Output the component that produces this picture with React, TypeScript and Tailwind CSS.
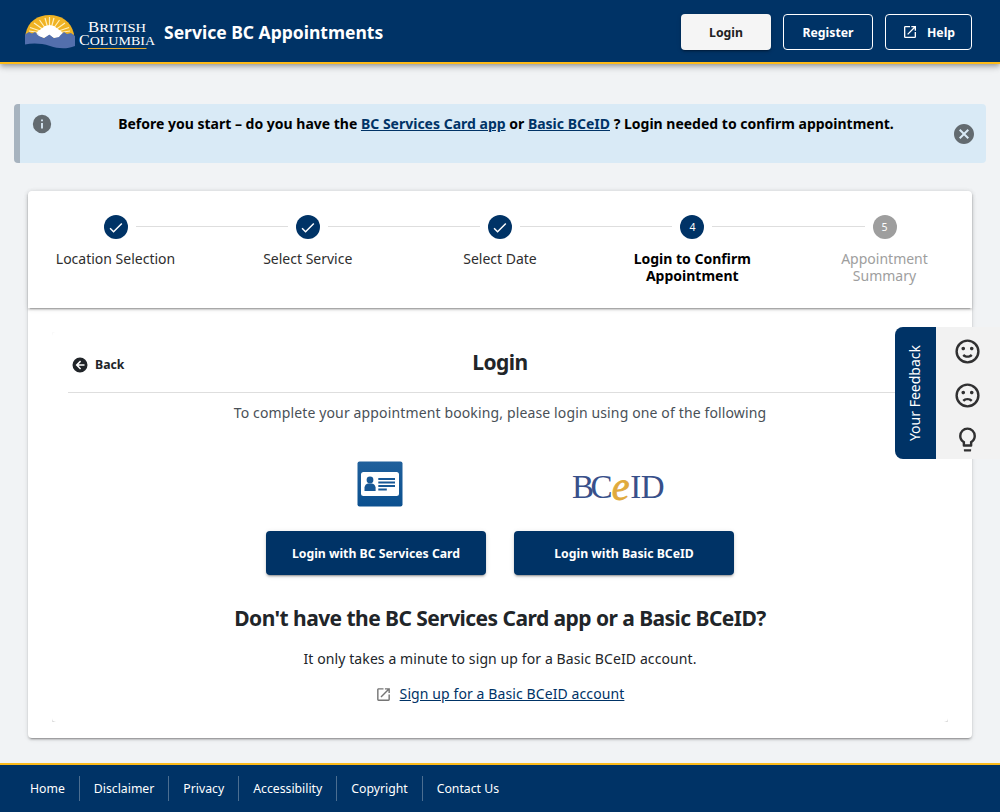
import React from "react";

const icons = {
  openInNew:
    "M14,3V5H17.59L7.76,14.83L9.17,16.24L19,6.41V10H21V3M19,19H5V5H12V3H5C3.89,3 3,3.9 3,5V19A2,2 0 0,0 5,21H19A2,2 0 0,0 21,19V12H19V19Z",
  check: "M21,7L9,19L3.5,13.5L4.91,12.09L9,16.17L19.59,5.59L21,7Z",
  information:
    "M13,9H11V7H13M13,17H11V11H13M12,2A10,10 0 0,0 2,12A10,10 0 0,0 12,22A10,10 0 0,0 22,12A10,10 0 0,0 12,2Z",
  closeCircle:
    "M12,2C17.53,2 22,6.47 22,12C22,17.53 17.53,22 12,22C6.47,22 2,17.53 2,12C2,6.47 6.47,2 12,2M15.59,7L12,10.59L8.41,7L7,8.41L10.59,12L7,15.59L8.41,17L12,13.41L15.59,17L17,15.59L13.41,12L17,8.41L15.59,7Z",
  arrowLeftCircle:
    "M2,12A10,10 0 0,1 12,2A10,10 0 0,1 22,12A10,10 0 0,1 12,22A10,10 0 0,1 2,12M18,11H10L13.5,7.5L12.08,6.08L6.16,12L12.08,17.92L13.5,16.5L10,13H18V11Z",
  happy:
    "M20,12A8,8 0 0,0 12,4A8,8 0 0,0 4,12A8,8 0 0,0 12,20A8,8 0 0,0 20,12M22,12A10,10 0 0,1 12,22A10,10 0 0,1 2,12A10,10 0 0,1 12,2A10,10 0 0,1 22,12M10,9.5C10,10.3 9.3,11 8.5,11C7.7,11 7,10.3 7,9.5C7,8.7 7.7,8 8.5,8C9.3,8 10,8.7 10,9.5M17,9.5C17,10.3 16.3,11 15.5,11C14.7,11 14,10.3 14,9.5C14,8.7 14.7,8 15.5,8C16.3,8 17,8.7 17,9.5M12,17.23C10.25,17.23 8.71,16.5 7.81,15.42L9.23,14C9.68,14.72 10.75,15.23 12,15.23C13.25,15.23 14.32,14.72 14.77,14L16.19,15.42C15.29,16.5 13.75,17.23 12,17.23Z",
  sad: "M20,12A8,8 0 0,0 12,4A8,8 0 0,0 4,12A8,8 0 0,0 12,20A8,8 0 0,0 20,12M22,12A10,10 0 0,1 12,22A10,10 0 0,1 2,12A10,10 0 0,1 12,2A10,10 0 0,1 22,12M15.5,8C16.3,8 17,8.7 17,9.5C17,10.3 16.3,11 15.5,11C14.7,11 14,10.3 14,9.5C14,8.7 14.7,8 15.5,8M10,9.5C10,10.3 9.3,11 8.5,11C7.7,11 7,10.3 7,9.5C7,8.7 7.7,8 8.5,8C9.3,8 10,8.7 10,9.5M12,14C13.75,14 15.29,14.72 16.19,15.81L14.77,17.23C14.32,16.5 13.25,16 12,16C10.75,16 9.68,16.5 9.23,17.23L7.81,15.81C8.71,14.72 10.25,14 12,14Z",
  lightbulb:
    "M12,2A7,7 0 0,1 19,9C19,11.38 17.81,13.47 16,14.74V17A1,1 0 0,1 15,18H9A1,1 0 0,1 8,17V14.74C6.19,13.47 5,11.38 5,9A7,7 0 0,1 12,2M9,21V20H15V21A1,1 0 0,1 14,22H10A1,1 0 0,1 9,21M12,4A5,5 0 0,0 7,9C7,11.05 8.23,12.81 10,13.58V16H14V13.58C15.77,12.81 17,11.05 17,9A5,5 0 0,0 12,4Z",
};

function Icon({ name, className }: { name: keyof typeof icons; className: string }) {
  return (
    <svg viewBox="0 0 24 24" fill="currentColor" className={"shrink-0 " + className}>
      <path d={icons[name]} />
    </svg>
  );
}

function BrandLogo() {
  return (
    <svg viewBox="0 0 132 36" className="mt-0.5 h-9 w-[132px] shrink-0">
      <path d="M1.500 20C4 7 14 1 25.500 1S47 7 50 20L48 26H3Z" fill="#f0b323" />
      <g stroke="#fff0bd" strokeWidth="1.200">
        <path d="M25.500 20V3M25.500 20L21 4M25.500 20L30 4M25.500 20L15.500 6M25.500 20L35.500 6M25.500 20L10 9M25.500 20L41 9M25.500 20L6 13.500M25.500 20L45 13.500M25.500 20L5 17M25.500 20L46 17" />
      </g>
      <path d="M11 23L13 18L17 15L21 12L25.500 11L30 12L34 15L38 18L40 23Z" fill="#fff" />
      <path d="M1 20.500L5 18L8 19.500L11 18L16 22L20 24L25 20L30 24L36 21.500L40 18L43 20L47 19L51 22V32C42 35.500 34 34.500 26 32C17 29 8 29 1 30.500Z" fill="#536fad" />
      <path d="M12 19.500L18 22L23 20L26 18.500L29 21L34 20L38 18.500L35 23L30 24L25.500 20.500L20 24L15 22Z" fill="#fff" />
      <g fill="#fff" fontFamily="'Liberation Serif', serif">
        <text x="64" y="18.300" fontSize="15.500" textLength="58" lengthAdjust="spacingAndGlyphs">
          B<tspan fontSize="13.500">RITISH</tspan>
        </text>
        <text x="55" y="31.200" fontSize="15.500" textLength="76" lengthAdjust="spacingAndGlyphs">
          C<tspan fontSize="13.500">OLUMBIA</tspan>
        </text>
      </g>
      <path d="M64 34.500H122.500" stroke="#e3a82b" strokeWidth="1" />
    </svg>
  );
}

function ServicesCardLogo() {
  return (
    <svg viewBox="0 0 46 46" className="h-[46px] w-[46px]">
      <defs>
        <linearGradient id="cardFill" x1="0" y1="0" x2="0" y2="1">
          <stop offset="0" stopColor="#20609c" />
          <stop offset="1" stopColor="#0b508f" />
        </linearGradient>
      </defs>
      <rect x="0.500" y="0.500" width="45" height="45" rx="2" fill="url(#cardFill)" />
      <rect x="4" y="11" width="38" height="24" rx="2.500" fill="#fff" />
      <g fill="#165795">
        <circle cx="13" cy="19" r="3.400" />
        <path d="M7.500 30V26.500Q8 23 11 22.500H15Q18 23 18.600 26.500V30Z" />
        <path d="M21.300 17H38V19H21.300ZM21.300 20.600H38V22.500H21.300ZM21.300 24H38V26H21.300ZM21.300 27.500H29.800V29.500H21.300Z" />
      </g>
    </svg>
  );
}

function BceidLogo() {
  return (
    <div
      className="flex h-[46px] w-[92px] items-center justify-between pt-1.5 font-['Liberation_Serif',serif] text-[33px] leading-10 text-[#38508a]"
    >
      <span className="flex w-[39px]">
        <span className="tracking-[-3.5px]">BC</span>
      </span>
      <span className="flex w-4 justify-center text-[40px] text-[#e0aa3c] italic [-webkit-text-stroke:0.8px_#e0aa3c]">e</span>
      <span className="flex w-[34px] justify-end tracking-[-0.5px]">ID</span>
    </div>
  );
}

const steps = ["Location Selection", "Select Service", "Select Date", "Login to Confirm Appointment", "Appointment Summary"];
const stepStyle = (i: number) =>
  i < 3 ? "text-[#2e2e2e]" : i === 3 ? "font-bold text-black" : "text-[#9e9e9e]";

const raised =
  "shadow-[0_3px_1px_-2px_rgba(0,0,0,0.2),0_2px_2px_0_rgba(0,0,0,0.14),0_1px_5px_0_rgba(0,0,0,0.12)]";

function Stepper() {
  return (
    <div className={"h-[117px] rounded-t pt-6 " + raised}>
      <div className="flex items-center pr-[75.4px] pl-[75.8px]">
        {steps.map((label, i) => (
          <React.Fragment key={label}>
            {i > 0 && <div className="mx-2 mb-px h-px flex-1 bg-[#dedede]" />}
            <div
              className={
                "flex h-6 w-6 items-center justify-center rounded-full text-[10.5px] text-white " +
                (i < 4 ? "bg-[#003366]" : "bg-[#9e9e9e]")
              }
            >
              {i < 3 ? <Icon name="check" className="mt-px h-[17.5px] w-[17.5px]" /> : <span className="pt-px">{i + 1}</span>}
            </div>
          </React.Fragment>
        ))}
      </div>
      <div className="mt-[11px] flex justify-between">
        {steps.map((label, i) => (
          <div key={label} className={"w-[175px] px-6 text-center text-sm leading-[17px] " + stepStyle(i)}>
            {label}
          </div>
        ))}
      </div>
    </div>
  );
}

function FeedbackTab() {
  return (
    <aside className="absolute top-[326.6px] right-0 flex h-[132px] w-[105.4px] overflow-hidden rounded-l-lg bg-[#f2f2f2]">
      <div className="flex w-[41px] items-center justify-center bg-[#003366] text-sm text-white">
        <span className="rotate-180 whitespace-nowrap [writing-mode:vertical-rl]">Your Feedback</span>
      </div>
      <div className="flex flex-1 flex-col items-center gap-[15px] pt-2.5 text-[#313132]">
        <Icon name="happy" className="h-[29px] w-[29px]" />
        <Icon name="sad" className="h-[29px] w-[29px]" />
        <Icon name="lightbulb" className="h-[29px] w-[29px]" />
      </div>
    </aside>
  );
}

export default function App() {
  return (
    <div className="relative flex h-[812px] flex-col overflow-hidden bg-[#f1f3f5] font-['Noto_Sans',sans-serif] text-[#212529]">
      <header className="flex h-16 shrink-0 items-center border-b-2 border-[#fcba19] bg-[#003366] pr-7 pl-6 text-white shadow-[0_2px_4px_-1px_rgba(0,0,0,0.2),0_4px_5px_0_rgba(0,0,0,0.14),0_1px_10px_0_rgba(0,0,0,0.12)]">
        <BrandLogo />
        <h1 className="mt-1 ml-2 flex-1 text-[17.5px] leading-none font-bold">Service BC Appointments</h1>
        <div className="mt-0.5 flex gap-3 text-[12.25px] font-bold">
          <button className={"h-9 w-[90px] rounded bg-[#f5f5f5] pt-0.5 text-[#212121] " + raised}>Login</button>
          <button className="h-9 w-[90px] rounded border border-white pt-0.5">Register</button>
          <button className="flex h-9 w-[87px] items-center justify-center gap-[9px] rounded border border-white">
            <Icon name="openInNew" className="h-4 w-4" />
            <span className="pt-0.5">Help</span>
          </button>
        </div>
      </header>

      <div className="mx-3.5 mt-10 flex h-[59px] shrink-0 rounded border-l-[6px] border-[#a7b3bf] bg-[#d9eaf6]">
        <Icon name="information" className="mt-[9px] ml-[11px] h-[22px] w-[22px] text-[#636b70]" />
        <p className="flex-1 pt-2.5 pl-[7px] text-center text-sm leading-5 font-bold text-black">
          Before you start – do you have the <a className="text-[#003366] underline">BC Services Card app</a> or{" "}
          <a className="text-[#003366] underline">Basic BCeID</a> ? Login needed to confirm appointment.
        </p>
        <Icon name="closeCircle" className="mr-2.5 h-6 w-6 self-center text-[#636b70]" />
      </div>

      <main className={"mx-7 mt-7 h-[547px] shrink-0 rounded bg-white " + raised}>
        <Stepper />
        <div className="mx-6 mt-6 h-[390px] overflow-hidden">
          <section className={"flex h-full flex-col rounded bg-white px-4 " + raised}>
            <div className="flex h-[61px] shrink-0 items-center border-b border-[#dedede] px-[3px] pt-0.5">
              <button className="mt-1 flex w-20 items-center gap-1.5 text-[12.25px] font-bold">
                <Icon name="arrowLeftCircle" className="mb-px h-[18px] w-[18px]" />
                Back
              </button>
              <h2 className="flex-1 text-center text-[21px] font-bold tracking-[-0.55px]">Login</h2>
              <div className="w-20" />
            </div>
            <p className="mt-2.5 text-center text-sm leading-5 tracking-[0.135px] text-[#495057]">
              To complete your appointment booking, please login using one of the following
            </p>
            <div className="mt-[38px] flex justify-center gap-7">
              <div className="flex w-[220px] flex-col items-center">
                <div className="flex h-[46px] w-[212px] justify-center pl-2">
                  <ServicesCardLogo />
                </div>
                <button className={"mt-6 h-11 w-full rounded bg-[#003366] pt-0.5 text-[12.25px] font-bold text-white " + raised}>
                  Login with BC Services Card
                </button>
              </div>
              <div className="flex w-[220px] flex-col items-center">
                <div className="flex h-[46px] w-full items-center justify-center pr-3">
                  <BceidLogo />
                </div>
                <button className={"mt-6 h-11 w-full rounded bg-[#003366] pt-0.5 text-[12.25px] font-bold text-white " + raised}>
                  Login with Basic BCeID
                </button>
              </div>
            </div>
            <h2 className="mt-[27px] text-center text-[21px] leading-8 font-bold tracking-[-0.55px]">
              Don't have the BC Services Card app or a Basic BCeID?
            </h2>
            <p className="mt-[15px] text-center text-sm leading-5 tracking-[0.1px]">
              It only takes a minute to sign up for a Basic BCeID account.
            </p>
            <div className="mt-[15px] flex items-center justify-center gap-2 pr-px text-sm leading-5 tracking-[0.1px] text-[#003366]">
              <Icon name="openInNew" className="mt-px h-[17px] w-[17px] text-[#757575]" />
              <a className="underline">Sign up for a Basic BCeID account</a>
            </div>
          </section>
        </div>
      </main>

      <footer className="mt-auto flex h-[49px] shrink-0 items-center border-t-2 border-[#fcba19] bg-[#003366] pl-4 text-[12.25px] text-white">
        {["Home", "Disclaimer", "Privacy", "Accessibility", "Copyright", "Contact Us"].map((item) => (
          <a key={item} className="flex h-[25px] items-center border-r border-[#4b6e91] px-3.5 pt-0.5 last:border-r-0">
            {item}
          </a>
        ))}
      </footer>

      <FeedbackTab />
    </div>
  );
}
